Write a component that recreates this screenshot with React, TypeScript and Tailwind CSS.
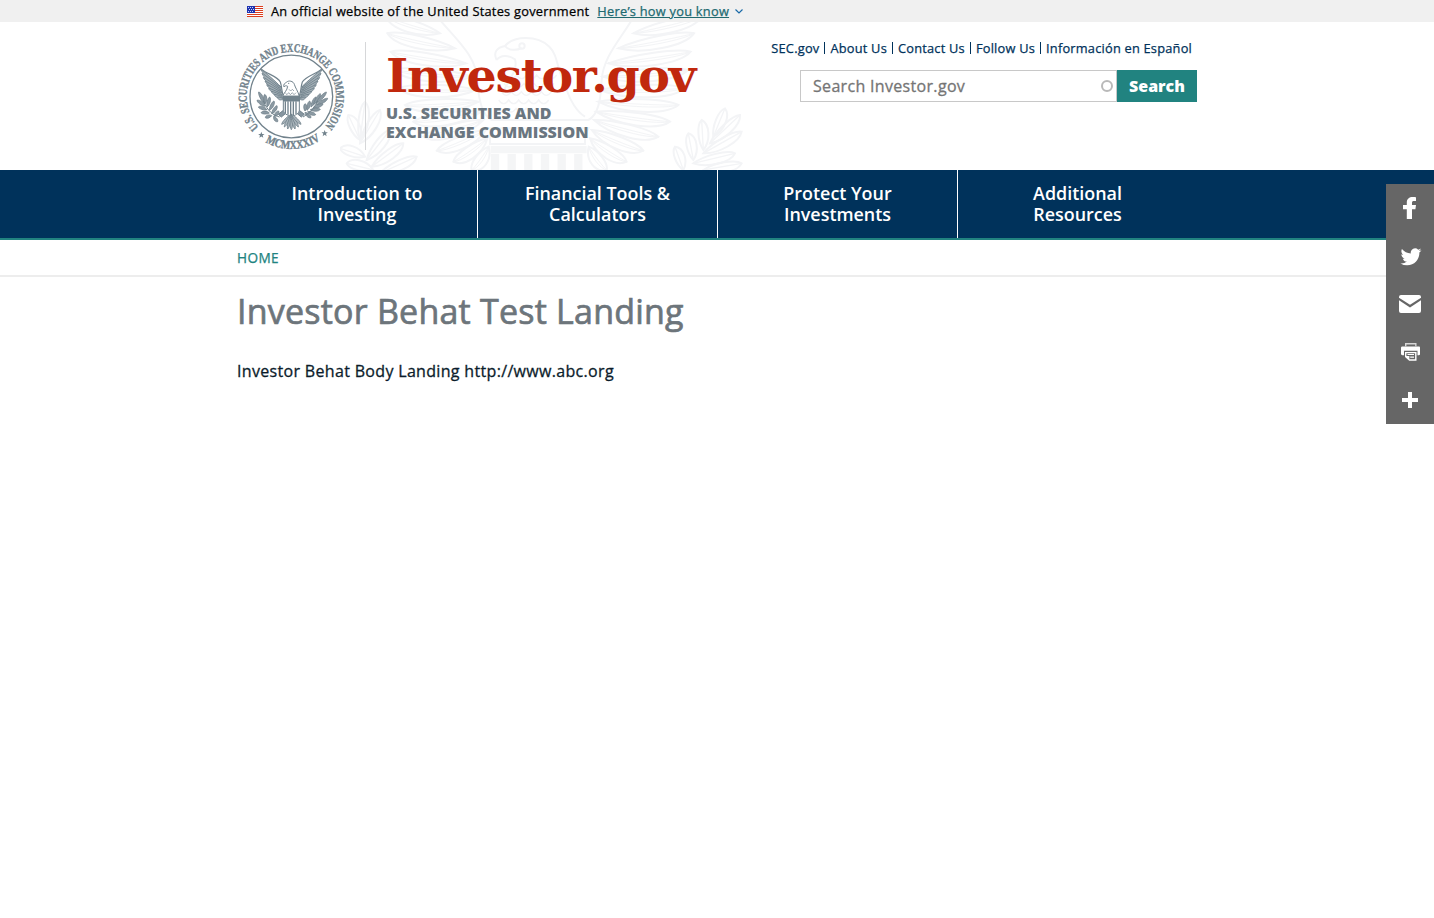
import React from "react";

type Pt = [number, number];

/** Outline of a slightly curved feather or leaf running from root to tip. */
function blade(root: Pt, tip: Pt, width: number, bend = 0): string {
  const dx = tip[0] - root[0];
  const dy = tip[1] - root[1];
  const len = Math.hypot(dx, dy) || 1;
  const nx = -dy / len;
  const ny = dx / len;
  const at = (t: number, off: number) =>
    `${(root[0] + dx * t + nx * off).toFixed(1)} ${(root[1] + dy * t + ny * off).toFixed(1)}`;
  return `M${at(0, 0)}C${at(0.3, width + bend)} ${at(0.85, width + bend)} ${at(1, 0)}C${at(0.85, bend - width)} ${at(0.3, bend - width)} ${at(0, 0)}Z`;
}

const leftTips: Pt[] = [[138, -10], [142, 40], [152, 95], [163, 150], [176, 205], [195, 255], [220, 305], [250, 350], [290, 392], [340, 425], [395, 450]];
const leftRoots: Pt[] = [[300, 40], [345, 85], [378, 130], [398, 170], [408, 210], [416, 245], [424, 275], [430, 300], [438, 330], [442, 355], [446, 380]];
const rightTips: Pt[] = [[1085, -10], [1062, 40], [1052, 95], [1044, 150], [1035, 205], [1015, 255], [990, 305], [955, 350], [910, 392], [860, 425], [800, 450]];
const rightRoots: Pt[] = [[880, 40], [835, 85], [805, 130], [788, 170], [780, 210], [774, 245], [768, 275], [762, 300], [755, 330], [750, 355], [746, 380]];

const sprigs: [Pt, Pt][] = [
  [[60, 360], [75, 245]], [[60, 360], [25, 285]], [[60, 370], [120, 270]], [[75, 410], [0, 385]],
  [[80, 420], [150, 330]], [[95, 440], [190, 370]], [[100, 450], [20, 430]], [[120, 460], [230, 410]],
  [[1120, 350], [1155, 265]], [[1110, 370], [1200, 285]], [[1090, 390], [1085, 300]], [[1090, 400], [1205, 335]],
  [[1060, 420], [1045, 340]], [[1060, 430], [1185, 400]], [[1030, 450], [1005, 380]], [[1090, 450], [1205, 430]],
];

function Watermark() {
  return (
    <svg className="pointer-events-none absolute top-0 left-[103px] h-[148px] w-[410px]" viewBox="0 6 1230 444" fill="none" stroke="#f3f4f6" strokeWidth="6" aria-hidden="true">
      {leftTips.map((t, i) => (
        <g key={i}>
          <path d={blade(leftRoots[i], t, 25, -8)} />
          <path d={blade(leftRoots[i], t, 5, -8)} strokeWidth="3" />
        </g>
      ))}
      {rightTips.map((t, i) => (
        <g key={i}>
          <path d={blade(rightRoots[i], t, 25, 8)} />
          <path d={blade(rightRoots[i], t, 5, 8)} strokeWidth="3" />
        </g>
      ))}
      <path d="M300 0C350 60 410 110 412 180C415 240 425 285 455 300H745C775 285 782 240 785 180C790 110 840 60 875 0" />
      <path d="M470 120C458 96 472 82 495 78C520 48 590 44 628 80C655 106 650 150 680 210C690 240 710 275 735 290M470 120C482 104 505 105 525 118C535 150 505 180 490 215M495 78C505 92 530 92 545 84" />
      <circle cx="546" cy="78" r="8" />
      {[0, 1, 2, 3, 4].map((r) => (
        <path key={r} strokeWidth="4" d={`M${500 - r * 8} ${165 + r * 25}q15 22 30 0q15 22 30 0q15 22 30 0q15 22 30 0q15 22 30 0`} />
      ))}
      <path d="M450 325H745L735 350V372H450V350Z" />
      <path d="M452 378H740V400H452Z" fill="#f5f6f7" stroke="none" />
      {[465, 515, 565, 615, 665, 715].map((x) => (
        <path key={x} d={`M${x} 402V450`} strokeWidth="25" stroke="#f4f5f6" />
      ))}
      {sprigs.map(([r, t], i) => (
        <g key={i}>
          <path d={blade(r, t, 20, 4)} />
          <path d={`M${r[0]} ${r[1]}L${t[0]} ${t[1]}`} strokeWidth="4" />
        </g>
      ))}
    </svg>
  );
}

const sealLeftTips: Pt[] = [[90, 97], [93, 109], [97, 121], [102, 132], [107, 143], [113, 154], [121, 163], [130, 172], [140, 180]];
const sealRightTips: Pt[] = [[273, 97], [270, 109], [266, 121], [261, 132], [256, 143], [250, 154], [242, 163], [233, 172], [223, 180]];
const sealLeaves: [Pt, Pt][] = [
  [[100, 200], [83, 165]], [[103, 200], [101, 172]], [[102, 208], [78, 190]], [[108, 210], [116, 180]],
  [[108, 218], [82, 210]], [[115, 220], [129, 192]], [[115, 228], [90, 227]], [[122, 230], [138, 206]],
  [[122, 236], [103, 242]], [[130, 238], [143, 222]], [[128, 238], [140, 254]],
  [[240, 210], [254, 180]], [[248, 202], [268, 170]], [[255, 198], [286, 165]], [[256, 204], [290, 184]],
  [[246, 212], [276, 201]], [[238, 218], [268, 217]], [[230, 224], [254, 233]], [[228, 220], [236, 192]],
  [[222, 226], [240, 242]], [[222, 222], [222, 200]],
];

function Seal() {
  return (
    <svg className="h-[120px] w-[120px] shrink-0" viewBox="0 0 360 360" fill="none" stroke="#71828c" aria-label="U.S. Securities and Exchange Commission seal">
      <circle cx="181" cy="178.500" r="124" strokeWidth="4" />
      <defs>
        <path id="seal-top" d="M83.500 270.500A134 134 0 1 1 280.500 268.200" />
        <path id="seal-bottom" d="M103 315A157 157 0 0 0 270 308" />
      </defs>
      <g fill="#71828c" stroke="#71828c" strokeWidth="1.200" fontFamily="Liberation Serif" fontWeight="700" fontSize="36">
        <text>
          <textPath href="#seal-top" textLength="618" lengthAdjust="spacingAndGlyphs">U.S. SECURITIES AND EXCHANGE COMMISSION</textPath>
        </text>
        <text>
          <textPath href="#seal-bottom" textLength="174" lengthAdjust="spacingAndGlyphs">MCMXXXIV</textPath>
        </text>
      </g>
      <g fill="#71828c" stroke="none">
        <path d="M91 284l2.500 7 7 0-5.500 4.500 2 7-6-4-6 4 2-7-5.500-4.500 7 0z" />
        <path d="M281 279l2.500 7 7 0-5.500 4.500 2 7-6-4-6 4 2-7-5.500-4.500 7 0z" />
      </g>
      <g fill="#a3afb6" strokeWidth="2.600">
        {sealLeftTips.map((t, i) => (
          <path key={i} d={blade([150 + i * 0.8, 150 + i * 4.5], t, 5, -3)} />
        ))}
        {sealRightTips.map((t, i) => (
          <path key={i} d={blade([212 - i * 0.8, 150 + i * 4.5], t, 5, 3)} />
        ))}
      </g>
      <path d="M92 97C110 112 140 118 148 135C153 150 152 168 158 178M271 97C253 112 223 118 214 135C209 150 210 168 204 178" strokeWidth="3.500" />
      <path d="M159 150C156 141 162 139 166 136C173 129 187 132 190 142C193 153 201 162 205 178H155C158 168 169 160 170 148C165 145 162 146 159 150Z" fill="#fff" strokeWidth="3" />
      <circle cx="173" cy="139" r="2" fill="#71828c" stroke="none" />
      <path d="M163 168l5 5 5-6 5 6 6-6 5 6 6-6M174 157l5 5 5-5 5 5" strokeWidth="2" />
      <path d="M155 176H207V192H155Z" fill="#71828c" stroke="none" />
      <path d="M157 192H205V220C205 230 192 234 181 240C170 234 157 230 157 220Z" fill="#fff" strokeWidth="3" />
      <path d="M163 193V229M171 193V233M179 193V238M187 193V235M195 193V231" strokeWidth="4" />
      <g fill="#a8b3ba" strokeWidth="2.500">
        {([[152, 262], [160, 270], [170, 276], [181, 278], [192, 276], [202, 270], [210, 262]] as Pt[]).map((t, i) => (
          <path key={i} d={blade([181, 232], t, 5)} />
        ))}
      </g>
      <path d="M157 220L142 232L151 240L163 230M205 220L220 232L211 240L199 230" fill="#8796a0" strokeWidth="3" />
      <g fill="#8c9aa3" strokeWidth="2.400">
        {sealLeaves.map(([r, t], i) => (
          <path key={i} d={blade(r, t, 6, 1)} />
        ))}
      </g>
      <path d="M97 192C110 222 126 235 146 240M260 192C248 218 232 230 216 240" strokeWidth="3" />
    </svg>
  );
}

function Flag() {
  return (
    <svg className="h-[11px] w-4" viewBox="0 0 16 11" shapeRendering="crispEdges" aria-hidden="true">
      <path fill="#fff" d="M0 0h16v11H0z" />
      <path fill="#db3e1f" d="M0 0h16v1H0zM0 2h16v1H0zM0 4h16v1H0zM0 6h16v1H0zM0 8h16v1H0zM0 10h16v1H0z" />
      <path fill="#1e33b1" d="M0 0h8v7H0z" />
      <path fill="#cdd3f0" d="M1 1h1v1H1zM3 1h1v1H3zM5 1h1v1H5zM2 3h1v1H2zM4 3h1v1H4zM6 3h1v1H6zM1 5h1v1H1zM3 5h1v1H3zM5 5h1v1H5z" />
    </svg>
  );
}

const topLinks = ["SEC.gov", "About Us", "Contact Us", "Follow Us", "Información en Español"];

const navItems: [string, string][] = [
  ["Introduction to", "Investing"],
  ["Financial Tools &", "Calculators"],
  ["Protect Your", "Investments"],
  ["Additional", "Resources"],
];

const shareIcons: { name: string; art: React.ReactNode }[] = [
  {
    name: "Facebook",
    art: <path d="M26 35V25.200h3.400l.6-4.200h-4v-2.200c0-1.300.5-1.900 1.900-1.900H30v-3.600c-.5-.1-1.700-.3-3.200-.3-3.600 0-6 1.900-6 5.500V21H17v4.200h3.800V35z" />,
  },
  {
    name: "Twitter",
    art: (
      <path
        transform="translate(11 10.800) scale(.875)"
        d="M28 8.557a9.913 9.913 0 0 1-2.828.775 4.930 4.930 0 0 0 2.166-2.725 9.738 9.738 0 0 1-3.130 1.194 4.920 4.920 0 0 0-3.593-1.550 4.924 4.924 0 0 0-4.794 6.049c-4.090-.21-7.720-2.170-10.150-5.150a4.942 4.942 0 0 0-.665 2.477c0 1.710.87 3.214 2.190 4.100a4.968 4.968 0 0 1-2.230-.616v.06c0 2.390 1.700 4.380 3.952 4.830-.414.115-.85.174-1.297.174-.318 0-.626-.03-.928-.086a4.935 4.935 0 0 0 4.600 3.420 9.893 9.893 0 0 1-6.114 2.107c-.398 0-.79-.023-1.175-.068a13.953 13.953 0 0 0 7.550 2.213c9.056 0 14.010-7.507 14.010-14.013 0-.213-.005-.426-.015-.637.96-.695 1.795-1.560 2.455-2.550z"
      />
    ),
  },
  {
    name: "Email",
    art: (
      <>
        <path d="M15 15h18a2 2 0 0 1 2 2v.7L24 24.800 13 17.700V17a2 2 0 0 1 2-2z" />
        <path d="M13 20.200l11 7.200 11-7.200V31a2 2 0 0 1-2 2H15a2 2 0 0 1-2-2z" />
      </>
    ),
  },
  {
    name: "Print",
    art: (
      <>
        <path opacity=".75" d="M19 15h11.500v3.200h-1.300v-1.700h-8.800v1.700H19z" />
        <path d="M16.500 18.500h16.300c.8 0 1.200.4 1.200 1.200v6.300c0 .8-.4 1.200-1.200 1.200h-1.300v-4.500H18v4.500h-1.500c-.8 0-1.500-.4-1.500-1.200v-6.300c0-.8.7-1.200 1.500-1.200z" />
        <path fillRule="evenodd" d="M19 24h11.500v8.700h-7.300L19 28.900zm1.400 1.200v2.700h3v3.400h5.700v-6.100z" />
        <path d="M21.500 25.900h6.500v1.200h-6.500zM24.200 28.500H28v1.200h-3.800z" />
      </>
    ),
  },
  { name: "More", art: <path d="M22 16h4v6h6v4h-6v6h-4v-6h-6v-4h6z" /> },
];

export default function App() {
  return (
    <div className="relative min-h-[918px] overflow-hidden bg-white font-['Open_Sans',sans-serif] text-[#0b1c2b]">
      <div className="h-[22px] bg-[#f0f0f0]">
        <div className="mx-auto flex h-full w-[960px] items-center pl-[10px] text-[12.800px] tracking-[0.255px] text-black [-webkit-text-stroke:0.25px]">
          <Flag />
          <span className="ml-2 pt-px whitespace-nowrap">An official website of the United States government</span>
          <a className="ml-2 pt-px whitespace-nowrap text-[#216a70] underline">Here’s how you know</a>
          <svg className="ml-1.5 h-[5px] w-2" viewBox="0 0 8 5" fill="none" stroke="#1a6aa8" strokeWidth="1.200" aria-hidden="true">
            <path d="M.5.5L4 4L7.500.5" />
          </svg>
        </div>
      </div>

      <header className="relative mx-auto flex h-[148px] w-[960px] justify-between">
        <Watermark />
        <div className="relative flex">
          <div className="-mr-px -ml-[6px] pt-[15px]">
            <Seal />
          </div>
          <div className="mt-5 ml-[15px] h-[108px] w-px bg-[#d6d7d9]" />
          <div className="ml-5 pt-[25px]">
            <div className="h-[57px] w-[312px] font-['DejaVu_Serif',serif] text-[47.500px] leading-[56px] font-bold tracking-[-1.300px] whitespace-nowrap text-[#c1280d]">Investor.gov</div>
            <div className="text-[16px] leading-[19px] font-extrabold whitespace-nowrap text-[#6a7680]">
              U.S. SECURITIES AND
              <br />
              EXCHANGE COMMISSION
            </div>
          </div>
        </div>
        <div className="relative flex flex-col items-end pt-[18px]">
          <div className="flex h-4 items-center pr-[5px] text-[12.800px] tracking-[0.220px] text-[#00325b] [-webkit-text-stroke:0.25px]">
            {topLinks.map((l, i) => (
              <React.Fragment key={l}>
                {i > 0 && <span className="mx-[5px] h-3 w-px bg-[#00325b]" />}
                <a className="pt-[2px] whitespace-nowrap">{l}</a>
              </React.Fragment>
            ))}
          </div>
          <div className="mt-[14px] flex h-8">
            <div className="flex w-[317px] items-center justify-between border border-[#c8c8c8] bg-white pr-[3px] pl-3 text-[16px] tracking-[0.320px] text-[#757575]">
              <span className="[-webkit-text-stroke:0.3px]">Search Investor.gov</span>
              <span className="h-3 w-3 rounded-full border-2 border-[#b9b9b9]" />
            </div>
            <button className="w-20 bg-[#218380] text-[16px] font-extrabold text-white">Search</button>
          </div>
        </div>
      </header>

      <nav className="h-[70px] border-b-2 border-[#218380] bg-[#00325b]">
        <div className="mx-auto grid h-full w-[960px] grid-cols-4">
          {navItems.map(([a, b], i) => (
            <a key={a} className={`pt-[13px] text-center text-[17.920px] leading-[21px] font-semibold text-white ${i > 0 ? "border-l border-white" : ""}`}>
              {a}
              <br />
              {b}
            </a>
          ))}
        </div>
      </nav>

      <div className="h-[37px] border-b-2 border-[#ededed]">
        <div className="mx-auto flex h-full w-[960px] items-center pt-px text-[13.600px] tracking-[0.400px] text-[#218380] [-webkit-text-stroke:0.25px]">HOME</div>
      </div>

      <main className="mx-auto w-[960px]">
        <h1 className="pt-[13px] text-[34px] leading-[42px] tracking-[0.220px] whitespace-nowrap text-[#6d757b] [-webkit-text-stroke:0.7px]">Investor Behat Test Landing</h1>
        <p className="mt-[27px] text-[16px] leading-6 tracking-[0.325px] whitespace-nowrap [-webkit-text-stroke:0.3px]">Investor Behat Body Landing http://www.abc.org</p>
      </main>

      <aside className="absolute top-[184px] right-0 flex w-12 flex-col bg-[#666]">
        {shareIcons.map((s) => (
          <a key={s.name} aria-label={s.name}>
            <svg className="block h-12 w-12" viewBox="0 0 48 48" fill="#fff">
              {s.art}
            </svg>
          </a>
        ))}
      </aside>
    </div>
  );
}
